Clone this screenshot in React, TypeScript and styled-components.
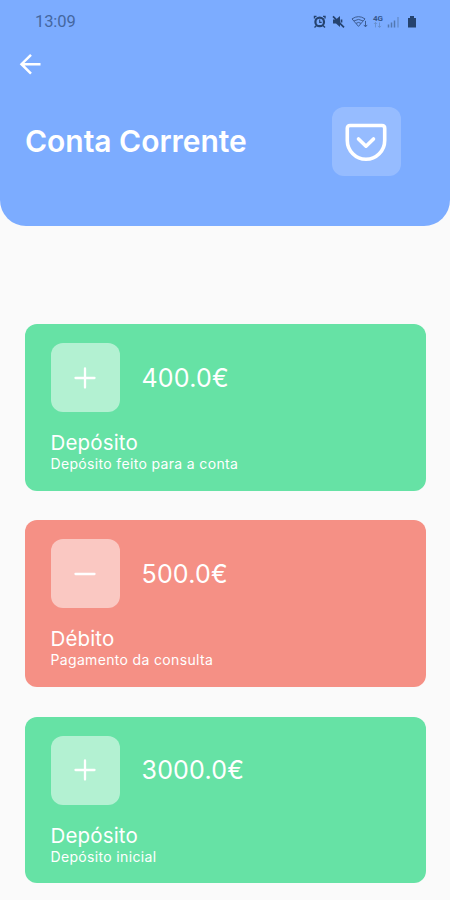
import React from "react";
import styled, { createGlobalStyle } from "styled-components";

const GlobalStyle = createGlobalStyle`
  * { box-sizing: border-box; }
  body {
    margin: 0;
    background: #fafafa;
    font-family: Inter, Roboto, sans-serif;
    color: #fff;
  }
`;

const Screen = styled.main`
  width: 450px;
  height: 900px;
  overflow: hidden;
  background: #fafafa;
`;

const Header = styled.header`
  height: 226px;
  border-radius: 0 0 26px 26px;
  background: #7cacff;
`;

const StatusBar = styled.div`
  display: flex;
  justify-content: space-between;
  align-items: center;
  height: 43px;
  padding: 0 31px 0 35px;
  color: #45679f;
`;

const Clock = styled.span`
  padding-top: 1px;
  font-family: Roboto, sans-serif;
  font-size: 16.5px;
  line-height: 20px;
  letter-spacing: -0.1px;
`;

const BackButton = styled.button`
  display: flex;
  margin: 0 0 0 19px;
  padding: 10px 0 0;
  border: 0;
  background: none;
  color: #fff;
`;

const TitleRow = styled.div`
  display: flex;
  justify-content: space-between;
  align-items: center;
  height: 69px;
  margin-top: 32px;
  padding: 0 49.5px 0 25px;
`;

const Title = styled.h1`
  margin: 0 0 2px;
  font-size: 30px;
  font-weight: 600;
  line-height: 36px;
  letter-spacing: -0.03px;
`;

const IconTile = styled.div<{ $opacity: number }>`
  display: flex;
  align-items: center;
  justify-content: center;
  width: 69px;
  height: 69px;
  border-radius: 12px;
  background: rgba(255, 255, 255, ${(p) => p.$opacity});
`;

const List = styled.section`
  display: flex;
  flex-direction: column;
  gap: 29.5px;
  padding: 98px 24.5px 0 25px;
`;

const Card = styled.article<{ $debit: boolean }>`
  height: 166.8px;
  padding: 19px 26px 0 25.5px;
  border-radius: 12px;
  background: ${(p) => (p.$debit ? "#f59085" : "#66e2a5")};
`;

const CardTop = styled.div`
  display: flex;
  align-items: center;
  gap: 22px;
`;

const Amount = styled.span`
  font-size: 25px;
  line-height: 32px;
  letter-spacing: 0.2px;
`;

const Kind = styled.div`
  margin-top: 18px;
  font-size: 20.5px;
  line-height: 26px;
  letter-spacing: 0.15px;
`;

const Detail = styled.div`
  font-size: 14px;
  line-height: 16px;
  letter-spacing: 0.34px;
`;

const entries = [
  { amount: "400.0€", kind: "Depósito", detail: "Depósito feito para a conta", debit: false },
  { amount: "500.0€", kind: "Débito", detail: "Pagamento da consulta", debit: true },
  { amount: "3000.0€", kind: "Depósito", detail: "Depósito inicial", debit: false },
];

const StatusIcons = () => (
  <svg width="106" height="18" viewBox="313 12.6 106 18" fill="none" stroke="#25436f">
    <circle cx="319.7" cy="21.5" r="4.3" strokeWidth="2.2" />
    <path d="M314.5 18v-2h2M323 16h2v2M316.5 25l-2 2M323 25l2 2" strokeWidth="1.4" />
    <path d="M319.7 19v3h2" strokeWidth="1.1" />
    <path d="M333 19h3l4-3.5v11l-4-3.5h-3z" fill="#25436f" stroke="none" />
    <path d="M333 16l11 11M341.5 19v3" strokeWidth="1.7" />
    <g stroke="#3d5d93">
      <path d="M352 18.5q6.5-4.5 13 0L358.5 26z" strokeWidth="1" />
      <path d="M354 20.5q4.5-3 9 0M356 23q2.5-2 5 0" strokeWidth="1" />
      <path d="M365.5 20.5v6M363.8 24.5l1.7 2 1.7-2" strokeWidth="1" />
    </g>
    <text x="373" y="20.6" fill="#34568d" stroke="none" fontFamily="Roboto" fontSize="8" fontWeight="700">4G</text>
    <path d="M375.5 27v-5M374 23.5l1.5-1.5 1.5 1.5M379.5 22v5M378 25.5l1.5 1.5 1.5-1.5" stroke="#668dc9" strokeWidth=".9" />
    <path d="M388.5 27v-3M391.5 27v-5M394.5 27v-7" stroke="#5277b1" strokeWidth="1.5" />
    <path d="M398 27V16.5" stroke="#638bc9" strokeWidth="1.3" />
    <path d="M408 17.5h2v-2h4v2h2V27h-8z" fill="#25436f" stroke="none" />
  </svg>
);

const BackArrow = () => (
  <svg width="23" height="22" viewBox="0 0 23 22" fill="none" stroke="currentColor" strokeWidth="2.5">
    <path d="M21.5 11.2H3M12 1.8L2.5 11.2l9.5 9.5" />
  </svg>
);

const PocketIcon = () => (
  <svg width="44" height="42" viewBox="0 0 44 42" fill="none" stroke="#fff" strokeWidth="3.6" strokeLinecap="round" strokeLinejoin="round">
    <path d="M6 4.5h32q2.7 0 2.7 2.7V19.500a18.700 18.700 0 0 1-37.400 0V7.200q0-2.700 2.700-2.700z" />
    <path d="M14.500 18l7.500 7.200 7.500-7.200" />
  </svg>
);

const SignIcon = ({ debit }: { debit: boolean }) => (
  <svg width="24" height="24" viewBox="0 0 24 24" fill="none" stroke="#fff" strokeWidth="2.3" strokeLinecap="round">
    <path d={debit ? "M2.5 12h19" : "M2.5 12h19M12 2.5v19"} />
  </svg>
);

export default function App() {
  return (
    <Screen>
      <GlobalStyle />
      <Header>
        <StatusBar>
          <Clock>13:09</Clock>
          <StatusIcons />
        </StatusBar>
        <BackButton aria-label="Voltar">
          <BackArrow />
        </BackButton>
        <TitleRow>
          <Title>Conta Corrente</Title>
          <IconTile $opacity={0.2}>
            <PocketIcon />
          </IconTile>
        </TitleRow>
      </Header>
      <List>
        {entries.map((e) => (
          <Card key={e.amount} $debit={e.debit}>
            <CardTop>
              <IconTile $opacity={0.5}>
                <SignIcon debit={e.debit} />
              </IconTile>
              <Amount>{e.amount}</Amount>
            </CardTop>
            <Kind>{e.kind}</Kind>
            <Detail>{e.detail}</Detail>
          </Card>
        ))}
      </List>
    </Screen>
  );
}
